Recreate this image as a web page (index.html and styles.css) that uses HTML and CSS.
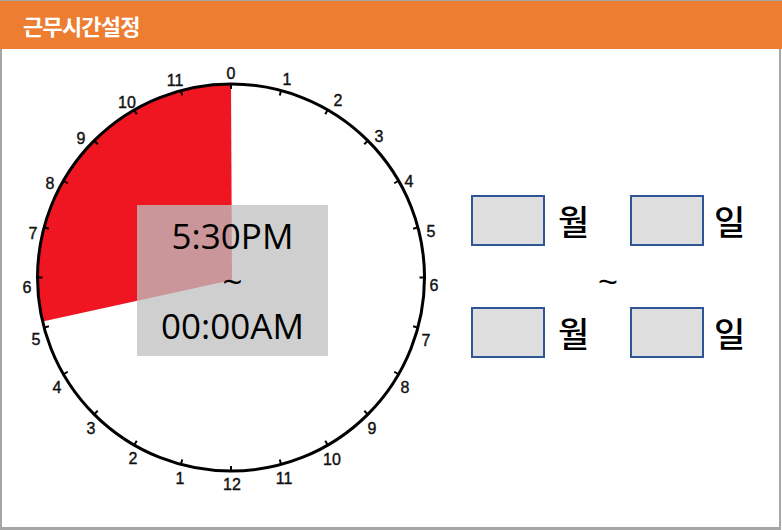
FILE: index.html
```html
<!DOCTYPE html>
<html lang="ko">
<head>
<meta charset="utf-8">
<title>근무시간설정</title>
<link rel="stylesheet" href="styles.css">
</head>
<body>
<div class="frame">
  <div class="header">근무시간설정</div>
  <div class="content">
    <div class="clock-wrap">
      <svg class="clock" width="462" height="478" viewBox="2 49 462 478" xmlns="http://www.w3.org/2000/svg">
        <path d="M232 280 L231 84 A193.5 193.5 0 0 0 42.6 321.4 Z" fill="#EF1622"/>
        <circle cx="231" cy="277.5" r="193.5" fill="none" stroke="#000" stroke-width="3"/>
        <g transform="translate(231 277.5)" stroke="#000" stroke-width="2">
          <line x1="0" y1="-188.5" x2="0" y2="-194" transform="rotate(0)"/>
          <line x1="0" y1="-188.5" x2="0" y2="-194" transform="rotate(15)"/>
          <line x1="0" y1="-188.5" x2="0" y2="-194" transform="rotate(30)"/>
          <line x1="0" y1="-188.5" x2="0" y2="-194" transform="rotate(45)"/>
          <line x1="0" y1="-188.5" x2="0" y2="-194" transform="rotate(60)"/>
          <line x1="0" y1="-188.5" x2="0" y2="-194" transform="rotate(75)"/>
          <line x1="0" y1="-188.5" x2="0" y2="-194" transform="rotate(90)"/>
          <line x1="0" y1="-188.5" x2="0" y2="-194" transform="rotate(105)"/>
          <line x1="0" y1="-188.5" x2="0" y2="-194" transform="rotate(120)"/>
          <line x1="0" y1="-188.5" x2="0" y2="-194" transform="rotate(135)"/>
          <line x1="0" y1="-188.5" x2="0" y2="-194" transform="rotate(150)"/>
          <line x1="0" y1="-188.5" x2="0" y2="-194" transform="rotate(165)"/>
          <line x1="0" y1="-188.5" x2="0" y2="-194" transform="rotate(180)"/>
          <line x1="0" y1="-188.5" x2="0" y2="-194" transform="rotate(195)"/>
          <line x1="0" y1="-188.5" x2="0" y2="-194" transform="rotate(210)"/>
          <line x1="0" y1="-188.5" x2="0" y2="-194" transform="rotate(225)"/>
          <line x1="0" y1="-188.5" x2="0" y2="-194" transform="rotate(240)"/>
          <line x1="0" y1="-188.5" x2="0" y2="-194" transform="rotate(255)"/>
          <line x1="0" y1="-188.5" x2="0" y2="-194" transform="rotate(270)"/>
          <line x1="0" y1="-188.5" x2="0" y2="-194" transform="rotate(285)"/>
          <line x1="0" y1="-188.5" x2="0" y2="-194" transform="rotate(300)"/>
          <line x1="0" y1="-188.5" x2="0" y2="-194" transform="rotate(315)"/>
          <line x1="0" y1="-188.5" x2="0" y2="-194" transform="rotate(330)"/>
          <line x1="0" y1="-188.5" x2="0" y2="-194" transform="rotate(345)"/>
        </g>
        <g class="nums">
          <text x="231" y="73">0</text>
          <text x="287" y="79">1</text>
          <text x="338" y="100">2</text>
          <text x="379" y="136">3</text>
          <text x="409" y="181">4</text>
          <text x="431" y="231">5</text>
          <text x="434" y="285">6</text>
          <text x="426" y="340">7</text>
          <text x="405" y="387">8</text>
          <text x="372" y="428">9</text>
          <text x="332" y="459">10</text>
          <text x="284" y="478">11</text>
          <text x="232" y="484">12</text>
          <text x="180" y="478">1</text>
          <text x="133" y="458">2</text>
          <text x="91" y="428">3</text>
          <text x="57" y="387">4</text>
          <text x="36" y="339">5</text>
          <text x="27" y="287">6</text>
          <text x="33" y="233">7</text>
          <text x="50" y="183">8</text>
          <text x="81" y="138">9</text>
          <text x="127" y="102">10</text>
          <text x="175" y="80">11</text>
        </g>
      </svg>
      <div class="time-box">
        <div class="time-line">5:30PM</div>
        <div class="time-line">~</div>
        <div class="time-line">00:00AM</div>
      </div>
    </div>
    <div class="panel">
      <div class="row">
        <div class="box"></div>
        <div class="unit unit-month">월</div>
        <div class="box"></div>
        <div class="unit unit-day">일</div>
      </div>
      <div class="tilde-row">~</div>
      <div class="row">
        <div class="box"></div>
        <div class="unit unit-month">월</div>
        <div class="box"></div>
        <div class="unit unit-day">일</div>
      </div>
    </div>
  </div>
</div>
</body>
</html>
```

FILE: styles.css
```css
html, body {
  margin: 0;
  padding: 0;
  background: #ffffff;
}

.frame {
  width: 782px;
  height: 530px;
  border-top: 1px solid #a6a6a6;
  box-sizing: border-box;
  font-family: "Noto Sans CJK KR", "Noto Sans", sans-serif;
}

.header {
  height: 48px;
  background: #ED7D31;
  color: #ffffff;
  font-family: "Noto Sans CJK KR", sans-serif;
  font-weight: 700;
  font-size: 22px;
  line-height: 48px;
  padding-left: 23px;
  letter-spacing: -0.8px;
}

.content {
  width: 781px;
  height: 481px;
  box-sizing: border-box;
  border-left: 2px solid #a6a6a6;
  border-right: 2px solid #a6a6a6;
  border-bottom: 3px solid #a6a6a6;
  display: flex;
  background: #ffffff;
}

.clock-wrap {
  position: relative;
  width: 462px;
  height: 478px;
  flex: none;
}

.clock {
  display: block;
}

.nums text {
  font-family: "Liberation Sans", Arial, sans-serif;
  font-size: 16px;
  fill: #111111;
  stroke: #111111;
  stroke-width: 0.4px;
  text-anchor: middle;
  dominant-baseline: central;
}

.time-box {
  position: absolute;
  left: 135px;
  top: 156px;
  width: 191px;
  height: 151px;
  box-sizing: border-box;
  padding-top: 8px;
  background: rgba(191, 191, 191, 0.755);
  display: flex;
  flex-direction: column;
  align-items: center;
  font-family: "Open Sans", "Noto Sans", sans-serif;
  font-size: 35px;
  line-height: 45px;
  color: #000000;
}

.panel {
  padding: 146px 0 0 7px;
  display: flex;
  flex-direction: column;
}

.row {
  display: flex;
  align-items: center;
  height: 51px;
}

.box {
  width: 74px;
  height: 51px;
  box-sizing: border-box;
  border: 2px solid #2F5597;
  background: #DEDEDE;
  flex: none;
}

.unit {
  font-family: "Noto Sans CJK KR", sans-serif;
  font-size: 34px;
  font-weight: 500;
  line-height: 40px;
  color: #000000;
}

.unit-month {
  width: 85px;
  padding-left: 13px;
  box-sizing: border-box;
}

.unit-day {
  padding-left: 10px;
}

.tilde-row {
  height: 61px;
  display: flex;
  align-items: center;
  padding-left: 127px;
  padding-top: 10px;
  box-sizing: border-box;
  font-family: "Liberation Sans", Arial, sans-serif;
  font-size: 34px;
  color: #000000;
}
```
